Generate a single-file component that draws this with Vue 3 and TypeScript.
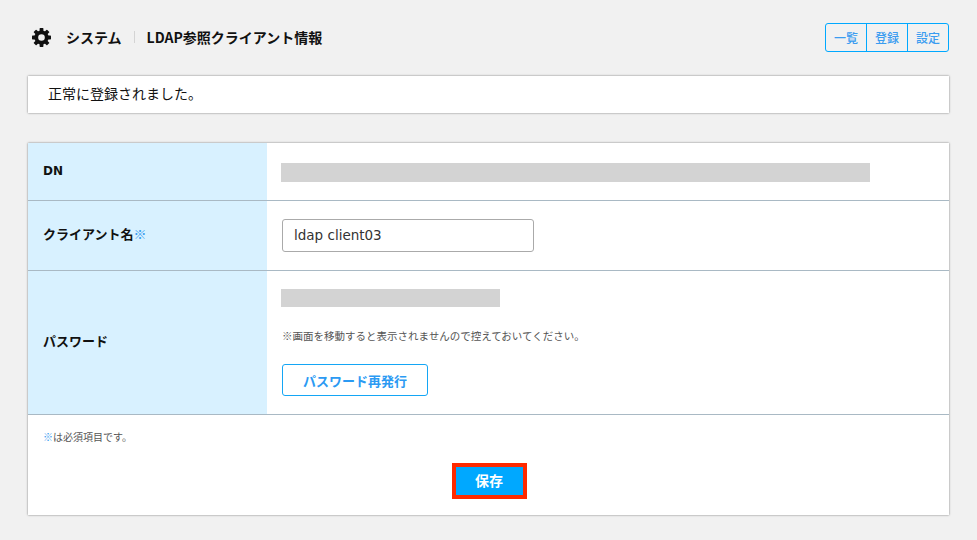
<script setup lang="ts">
const tabs: string[] = ['一覧', '登録', '設定']
const teeth: number[] = [0, 45, 90, 135, 180, 225, 270, 315]
</script>

<template>
  <div class="page">
    <header class="head">
      <div class="title">
        <svg class="gear" viewBox="0 0 24 24" width="19" height="19" aria-hidden="true">
          <circle cx="12" cy="12" r="6.6" fill="none" stroke="#111" stroke-width="4.8" />
          <rect
            v-for="a in teeth"
            :key="a"
            x="9.6"
            y="0"
            width="4.8"
            height="6"
            rx="0.8"
            fill="#111"
            :transform="`rotate(${a} 12 12)`"
          />
        </svg>
        <span class="sys">システム</span>
        <span class="sep"></span>
        <span class="sub">LDAP参照クライアント情報</span>
      </div>
      <nav class="tabs">
        <a v-for="t in tabs" :key="t" class="tab">{{ t }}</a>
      </nav>
    </header>

    <div class="notice">正常に登録されました。</div>

    <section class="form">
      <div class="row row-dn">
        <div class="label dn">DN</div>
        <div class="value"><div class="mask mask-dn"></div></div>
      </div>
      <div class="row row-name">
        <div class="label up">クライアント名<span class="req">※</span></div>
        <div class="value"><input class="input" type="text" value="ldap client03" /></div>
      </div>
      <div class="row row-pass">
        <div class="label up">パスワード</div>
        <div class="value pass">
          <div class="mask mask-pass"></div>
          <p class="hint">※画面を移動すると表示されませんので控えておいてください。</p>
          <button class="reissue" type="button">パスワード再発行</button>
        </div>
      </div>
      <div class="foot">
        <p class="note"><span class="req">※</span>は必須項目です。</p>
        <div class="actions">
          <button class="save" type="button">保存</button>
        </div>
      </div>
    </section>
  </div>
</template>

<style>
html, body { margin: 0; background: #f1f1f1; }
</style>

<style scoped>
.page {
  box-sizing: border-box;
  width: 977px;
  height: 540px;
  padding: 23px 28px 0;
  background: #f1f1f1;
  font-family: "Noto Sans CJK JP", "Liberation Sans", sans-serif;
  color: #111;
  overflow: hidden;
}
.head {
  display: flex;
  justify-content: space-between;
  align-items: flex-start;
  height: 53px;
}
.title {
  display: flex;
  align-items: center;
  height: 29px;
  font-size: 14px;
  font-weight: 700;
  line-height: 27px;
  padding-bottom: 1px;
  box-sizing: border-box;
}
.gear { margin-left: 4px; margin-right: 15px; }
.sep { width: 1px; height: 12px; background: #d4d4d4; margin: 0 12px 0 12px; }
.tabs {
  display: flex;
  height: 29px;
  box-sizing: border-box;
  border: 1px solid #00a8ff;
  border-radius: 3px;
}
.tab {
  width: 40px;
  text-align: center;
  font-size: 12px;
  line-height: 27px;
  color: #3a9cf0;
  font-weight: 500;
}
.tab + .tab { border-left: 1px solid #00a8ff; }
.notice {
  box-sizing: border-box;
  height: 37px;
  padding-left: 20px;
  background: #fff;
  font-size: 14px;
  line-height: 35px;
  box-shadow: 0 0 2px rgba(0, 0, 0, .5);
  margin-bottom: 30px;
}
.form {
  background: #fff;
  box-shadow: 0 0 2px rgba(0, 0, 0, .5);
  height: 372px;
}
.row {
  display: flex;
  border-bottom: 1px solid #a9b9c4;
  box-sizing: border-box;
}
.row-dn { height: 58px; }
.row-name { height: 70px; }
.row-pass { height: 144px; }
.label {
  width: 239px;
  flex: none;
  box-sizing: border-box;
  padding-left: 15px;
  background: #d8f1ff;
  font-size: 13px;
  font-weight: 700;
  display: flex;
  align-items: center;
}
.up { padding-bottom: 5px; }
.dn { padding-bottom: 2px; font-family: "DejaVu Sans", sans-serif; font-size: 12px; }
.req { color: #3a9cf0; font-weight: 400; }
.value {
  flex: 1;
  padding-left: 14px;
  display: flex;
  align-items: center;
}
.mask { background: #d3d3d3; }
.mask-dn { width: 589px; height: 19px; margin-top: 1px; }
.mask-pass { width: 219px; height: 18px; }
.input {
  box-sizing: border-box;
  width: 252px;
  height: 33px;
  margin-left: 1px;
  margin-bottom: 1px;
  padding: 0 11px;
  border: 1px solid #aaa;
  border-radius: 3px;
  background: #fff;
  font-family: "DejaVu Sans", sans-serif;
  font-size: 13.5px;
  color: #333;
  outline: none;
}
.pass {
  flex-direction: column;
  align-items: flex-start;
  padding-top: 18px;
}
.hint {
  margin: 21px 0 0 1px;
  font-size: 10.5px;
  line-height: 16px;
  color: #555;
}
.reissue {
  box-sizing: border-box;
  width: 146px;
  height: 32px;
  margin: 20px 0 0 1px;
  padding: 0;
  background: #fff;
  border: 1px solid #14a6f5;
  border-radius: 3px;
  color: #2b9af3;
  font-family: inherit;
  font-size: 13px;
  font-weight: 700;
}
.foot { padding: 14px 15px 0; }
.note {
  margin: 0;
  font-size: 10px;
  line-height: 15px;
  color: #555;
}
.actions {
  display: flex;
  justify-content: center;
  margin-top: 19px;
}
.save {
  box-sizing: border-box;
  width: 75px;
  height: 36px;
  margin-left: 1px;
  padding: 0 0 3px;
  background: #00a8ff;
  border: 4px solid #ff2a00;
  color: #fff;
  font-family: inherit;
  font-size: 14px;
  font-weight: 700;
}
</style>
